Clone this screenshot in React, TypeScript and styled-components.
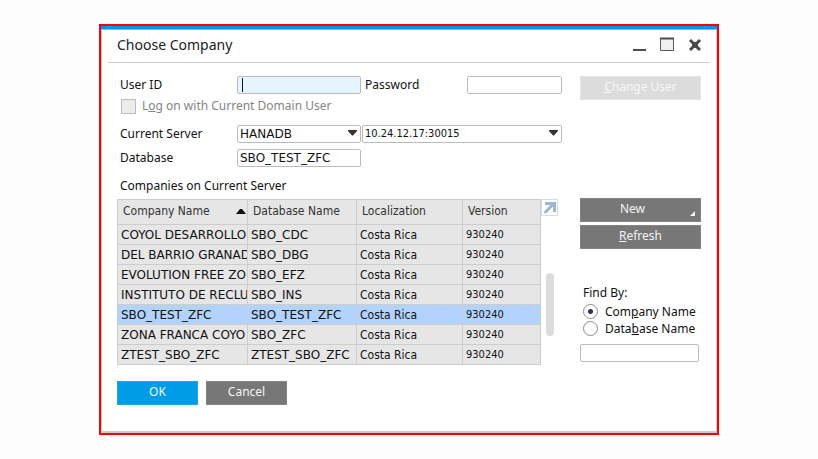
import React, { useState } from "react";
import styled, { createGlobalStyle } from "styled-components";

const condensed = `"DejaVu Sans Condensed", "DejaVu Sans", sans-serif`;
const wide = `"DejaVu Sans", sans-serif`;

const GlobalStyle = createGlobalStyle`
  *, *::before, *::after { box-sizing: border-box; }
  body {
    margin: 0;
    background: #fcfcfc;
    color: #111;
    font-family: "Noto Sans", sans-serif;
    font-size: 12px;
    line-height: 16px;
  }
  input, select, button { font: inherit; color: inherit; margin: 0; }
`;

const Page = styled.div`
  padding: 24px 16px;
`;

const Frame = styled.main`
  max-width: 620px;
  margin: 0 auto;
  border: 2px solid #fb0000;
`;

const Dialog = styled.section`
  background: #fff;
  border: 1px solid #c9cdcf;
  border-top: 0;
  border-bottom-width: 2px;
  padding-bottom: 26px;

  &::before {
    content: "";
    display: block;
    height: 4px;
    margin: 0 -1px;
    background: #0099e5;
    border-bottom: 1px solid #6cc4f0;
  }
`;

const TitleBar = styled.header`
  display: flex;
  align-items: center;
  justify-content: space-between;
  height: 33px;
  margin: 0 6px;
  padding: 0 7px 3px 9px;
  border-bottom: 1px solid #cfcfcf;
`;

const Title = styled.h1`
  margin: 0;
  font-size: 14px;
  font-weight: 400;
  line-height: 20px;
  color: #222;
`;

const WindowControls = styled.div`
  display: flex;
  gap: 12px;
`;

const WindowButton = styled.button`
  display: block;
  width: 16px;
  height: 16px;
  padding: 0;
  border: 0;
  background: none;
  svg { display: block; }
`;

const Section = styled.div`
  display: flex;
  padding: 0 15px;
`;

const FormSection = styled(Section)`
  gap: 18px;
  padding-top: 13px;
`;

const ListSection = styled(Section)`
  gap: 22px;
  padding-top: 4px;
`;

const Form = styled.div`
  flex: 1;
  min-width: 0;
  padding-left: 3px;
`;

const FieldRow = styled.div<{ $gap?: number }>`
  display: flex;
  align-items: center;
  height: 18px;
  margin-top: ${(p) => p.$gap ?? 0}px;
`;

const Label = styled.label`
  flex: none;
  width: 117px;
`;

const TextBox = styled.input`
  display: block;
  width: 100%;
  height: 18px;
  padding: 0 2px;
  border: 1px solid #b9bcbe;
  border-radius: 2px;
  background: #fff;
  font-family: ${wide};
  outline: 0;
`;

const UserBox = styled(TextBox)`
  background: #e6f4fe;
  caret-color: transparent;
`;

const Field = styled.div<{ $width?: number; $left?: number }>`
  position: relative;
  flex: ${(p) => (p.$width ? "none" : "1")};
  width: ${(p) => (p.$width ? `${p.$width}px` : "auto")};
  min-width: 0;
  margin-left: ${(p) => p.$left ?? 0}px;
`;

const Caret = styled.span`
  position: absolute;
  left: 5px;
  top: 2px;
  width: 1px;
  height: 14px;
  background: #111;
`;

const Select = styled.select`
  display: block;
  width: 100%;
  height: 18px;
  padding: 0 18px 0 2px;
  border: 1px solid #b9bcbe;
  border-radius: 2px;
  background: #fff;
  font-family: ${wide};
  appearance: none;
  outline: 0;
`;

const AddressSelect = styled(Select)`
  font-family: ${condensed};
  font-size: 11px;
`;

const SelectArrow = styled.svg`
  position: absolute;
  right: 4px;
  top: 5px;
  pointer-events: none;
`;

const CheckLabel = styled.label`
  display: flex;
  align-items: center;
  gap: 6px;
  margin-top: 4px;
  padding-left: 1px;
  color: #858585;
`;

const CheckBox = styled.input`
  appearance: none;
  width: 15px;
  height: 15px;
  border: 1px solid #bdbdbd;
  background: #ececec;
`;

const Side = styled.div`
  flex: none;
  width: 121px;
`;

const ActionButton = styled.button<{ $primary?: boolean }>`
  position: relative;
  display: block;
  width: 100%;
  height: 24px;
  padding: 0 0 2px;
  border: 1px solid ${(p) => (p.$primary ? "#1ba6e9" : "#848484")};
  background: ${(p) => (p.$primary ? "#009de6" : "#777")};
  color: #f4f4f4;
  text-align: center;

  &:disabled {
    border-color: #e4e4e4;
    background: #dcdcdc;
    color: #f8f8f8;
  }
`;

const SideButton = styled(ActionButton)`
  margin-bottom: 3px;
`;

const MenuButton = styled(SideButton)`
  padding-right: 16px;
`;

const ButtonCorner = styled.svg`
  position: absolute;
  right: 5px;
  bottom: 5px;
`;

const ListCaption = styled.h2`
  margin: 11px 18px 0;
  font: inherit;
`;

const ListArea = styled.div`
  display: flex;
  flex: 1;
  min-width: 0;
  padding-top: 1px;
`;

const Table = styled.table`
  flex: 1;
  width: 100%;
  min-width: 0;
  table-layout: fixed;
  border-collapse: collapse;
  background: #e6e6e6;
  font-family: ${condensed};
`;

const Column = styled.col<{ $width?: number }>`
  width: ${(p) => (p.$width ? `${p.$width}px` : "auto")};
`;

const HeadCell = styled.th`
  height: 25px;
  padding: 0 0 2px 5px;
  border: 1px solid #cdcdcd;
  font-weight: 400;
  text-align: left;
  white-space: nowrap;
  overflow: hidden;
  color: #333;
`;

const SortHead = styled.div`
  display: flex;
  align-items: center;
  justify-content: space-between;
  padding-right: 1px;
`;

const Cell = styled.td`
  height: 20px;
  padding: 0 0 0 3px;
  border: 1px solid #cdcdcd;
  white-space: nowrap;
  overflow: hidden;
`;

const NameCell = styled(Cell)`
  font-family: ${wide};
`;

const NumberCell = styled(Cell)`
  font-size: 11px;
`;

const Row = styled.tr`
  &[aria-selected="true"] { background: #b3d3ff; }
`;

const Rail = styled.div`
  display: flex;
  flex-direction: column;
  align-items: center;
  flex: none;
  width: 17px;
`;

const ExpandButton = styled.button`
  width: 17px;
  height: 17px;
  padding: 0;
  border: 1px solid #cfdeec;
  background: #fff;
  svg { display: block; }
`;

const ScrollThumb = styled.div`
  width: 8px;
  height: 63px;
  margin-top: 57px;
  border-radius: 4px;
  background: #dcdcdc;
`;

const FindGroup = styled.fieldset`
  margin: 36px 0 0;
  padding: 0 2px 0 0;
  border: 0;
`;

const FindLegend = styled.legend`
  padding: 0 0 2px 3px;
`;

const RadioLabel = styled.label`
  display: flex;
  align-items: center;
  gap: 7px;
  height: 17px;
  padding-left: 3px;
  white-space: nowrap;
`;

const Radio = styled.input`
  appearance: none;
  flex: none;
  width: 15px;
  height: 15px;
  border: 1px solid #8d8d8d;
  border-radius: 50%;
  background: #fff;
  &:checked { background: radial-gradient(circle, #33334d 2px, #fff 3px); }
`;

const FindBox = styled(TextBox)`
  margin-top: 7px;
`;

const Footer = styled.footer`
  display: flex;
  gap: 8px;
  padding: 16px 15px 0;
`;

const FooterButton = styled(ActionButton)`
  width: 81px;
`;

const companies = [
  ["COYOL DESARROLLO", "SBO_CDC"],
  ["DEL BARRIO GRANAD", "SBO_DBG"],
  ["EVOLUTION FREE ZO", "SBO_EFZ"],
  ["INSTITUTO DE RECLU", "SBO_INS"],
  ["SBO_TEST_ZFC", "SBO_TEST_ZFC"],
  ["ZONA FRANCA COYO", "SBO_ZFC"],
  ["ZTEST_SBO_ZFC", "ZTEST_SBO_ZFC"],
];

const DownArrow = () => (
  <SelectArrow width="9" height="6" viewBox="0 0 9 6" aria-hidden="true">
    <path d="M0 0h9v1L5 5.5H4L0 1z" fill="#33333b" />
  </SelectArrow>
);

export default function App() {
  const [selected, setSelected] = useState("SBO_TEST_ZFC");
  const [findBy, setFindBy] = useState("company");

  return (
    <Page>
      <GlobalStyle />
      <Frame>
        <Dialog role="dialog" aria-labelledby="title">
          <TitleBar>
            <Title id="title">Choose Company</Title>
            <WindowControls>
              <WindowButton aria-label="Minimize">
                <svg width="16" height="16" viewBox="0 0 16 16">
                  <path d="M2 13h13" stroke="#4d4d4d" strokeWidth="2" />
                </svg>
              </WindowButton>
              <WindowButton aria-label="Maximize">
                <svg width="16" height="16" viewBox="0 0 16 16">
                  <path d="M1.5 1.5h13v12h-13z" fill="#f0f0f0" stroke="#5a5a5a" />
                  <path d="M1 1.5h14" stroke="#4d4d4d" strokeWidth="2" />
                </svg>
              </WindowButton>
              <WindowButton aria-label="Close">
                <svg width="16" height="16" viewBox="0 0 16 16">
                  <path d="M3 3l10 10M13 3L3 13" stroke="#4a4a4a" strokeWidth="3" />
                  <path d="M5 5h6v6H5z" fill="#4a4a4a" />
                </svg>
              </WindowButton>
            </WindowControls>
          </TitleBar>

          <FormSection>
            <Form>
              <FieldRow>
                <Label htmlFor="user">User ID</Label>
                <Field $width={124}>
                  <UserBox id="user" />
                  <Caret />
                </Field>
                <Field $left={4}>
                  <label htmlFor="password">Password</label>
                </Field>
                <Field $width={95}>
                  <TextBox id="password" type="password" />
                </Field>
              </FieldRow>
              <CheckLabel>
                <CheckBox type="checkbox" disabled />
                <span>L<u>o</u>g on with Current Domain User</span>
              </CheckLabel>
              <FieldRow $gap={11}>
                <Label htmlFor="server">Current Server</Label>
                <Field $width={124}>
                  <Select id="server">
                    <option>HANADB</option>
                  </Select>
                  <DownArrow />
                </Field>
                <Field $left={1}>
                  <AddressSelect aria-label="Server address">
                    <option>10.24.12.17:30015</option>
                  </AddressSelect>
                  <DownArrow />
                </Field>
              </FieldRow>
              <FieldRow $gap={6}>
                <Label htmlFor="database">Database</Label>
                <Field $width={124}>
                  <TextBox id="database" defaultValue="SBO_TEST_ZFC" />
                </Field>
              </FieldRow>
            </Form>
            <Side>
              <SideButton disabled><u>C</u>hange User</SideButton>
            </Side>
          </FormSection>

          <ListCaption id="companies">Companies on Current Server</ListCaption>
          <ListSection>
            <ListArea>
              <Table aria-labelledby="companies">
                <colgroup>
                  <Column $width={130} />
                  <Column $width={109} />
                  <Column $width={106} />
                  <Column />
                </colgroup>
                <thead>
                  <tr>
                    <HeadCell aria-sort="ascending">
                      <SortHead>
                        Company Name
                        <svg width="10" height="6" viewBox="0 0 10 6" aria-hidden="true">
                          <path d="M0 6l4-5h2l4 5z" fill="#111" />
                        </svg>
                      </SortHead>
                    </HeadCell>
                    <HeadCell>Database Name</HeadCell>
                    <HeadCell>Localization</HeadCell>
                    <HeadCell>Version</HeadCell>
                  </tr>
                </thead>
                <tbody>
                  {companies.map(([name, db]) => (
                    <Row key={db} aria-selected={db === selected} onClick={() => setSelected(db)}>
                      <NameCell>{name}</NameCell>
                      <NameCell>{db}</NameCell>
                      <Cell>Costa Rica</Cell>
                      <NumberCell>930240</NumberCell>
                    </Row>
                  ))}
                </tbody>
              </Table>
              <Rail>
                <ExpandButton aria-label="Expand list">
                  <svg width="15" height="15" viewBox="0 0 15 15">
                    <path d="M3 3.5h9.500v8.500" fill="none" stroke="#9db6d6" strokeWidth="3" />
                    <path d="M2.500 13L12 3.500" stroke="#9db6d6" strokeWidth="3" />
                  </svg>
                </ExpandButton>
                <ScrollThumb />
              </Rail>
            </ListArea>
            <Side>
              <MenuButton>
                New
                <ButtonCorner width="5" height="5" viewBox="0 0 5 5" aria-hidden="true">
                  <path d="M5 0v5H0z" fill="#f4f4f4" />
                </ButtonCorner>
              </MenuButton>
              <SideButton><u>R</u>efresh</SideButton>
              <FindGroup>
                <FindLegend>Find By:</FindLegend>
                <RadioLabel>
                  <Radio type="radio" name="find" checked={findBy === "company"} onChange={() => setFindBy("company")} />
                  <span>Com<u>p</u>any Name</span>
                </RadioLabel>
                <RadioLabel>
                  <Radio type="radio" name="find" checked={findBy === "database"} onChange={() => setFindBy("database")} />
                  <span>Data<u>b</u>ase Name</span>
                </RadioLabel>
                <FindBox aria-label="Find" />
              </FindGroup>
            </Side>
          </ListSection>

          <Footer>
            <FooterButton $primary>OK</FooterButton>
            <FooterButton>Cancel</FooterButton>
          </Footer>
        </Dialog>
      </Frame>
    </Page>
  );
}
